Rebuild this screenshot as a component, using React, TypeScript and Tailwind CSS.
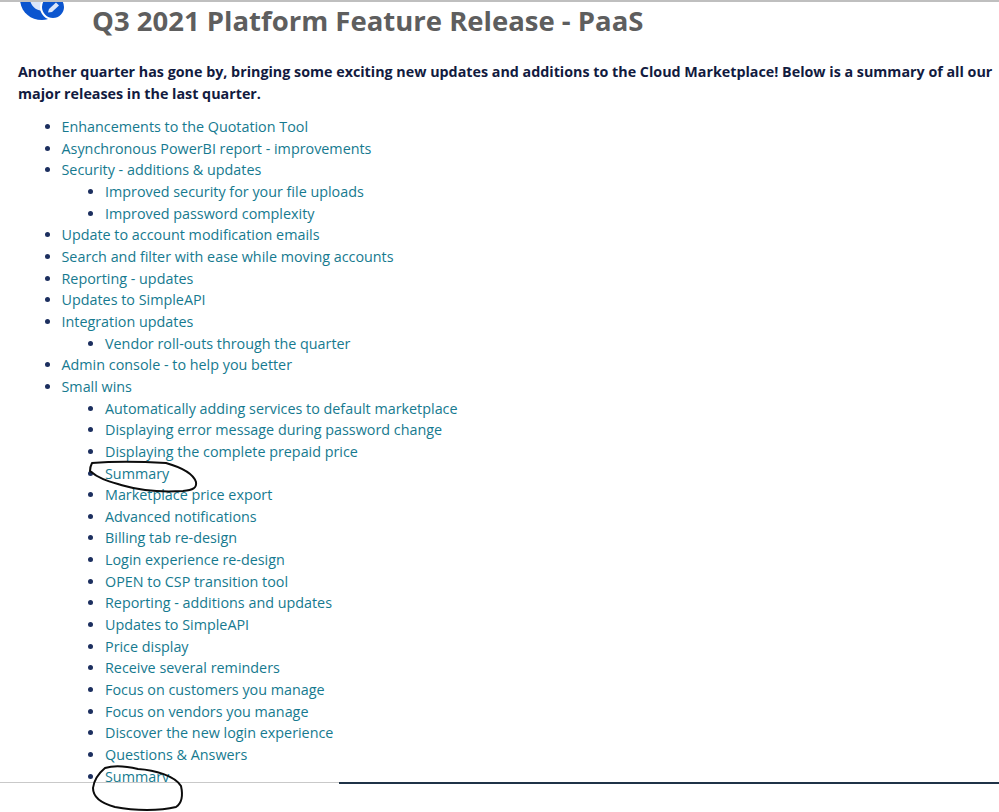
import React from "react";

type Item = { t: string; sub?: string[] };

const items: Item[] = [
  { t: "Enhancements to the Quotation Tool" },
  { t: "Asynchronous PowerBI report - improvements" },
  { t: "Security - additions & updates", sub: ["Improved security for your file uploads", "Improved password complexity"] },
  { t: "Update to account modification emails" },
  { t: "Search and filter with ease while moving accounts" },
  { t: "Reporting - updates" },
  { t: "Updates to SimpleAPI" },
  { t: "Integration updates", sub: ["Vendor roll-outs through the quarter"] },
  { t: "Admin console - to help you better" },
  {
    t: "Small wins",
    sub: [
      "Automatically adding services to default marketplace",
      "Displaying error message during password change",
      "Displaying the complete prepaid price",
      "Summary",
      "Marketplace price export",
      "Advanced notifications",
      "Billing tab re-design",
      "Login experience re-design",
      "OPEN to CSP transition tool",
      "Reporting - additions and updates",
      "Updates to SimpleAPI",
      "Price display",
      "Receive several reminders",
      "Focus on customers you manage",
      "Focus on vendors you manage",
      "Discover the new login experience",
      "Questions & Answers",
      "Summary",
    ],
  },
];

const font = "font-['Open_Sans','Noto_Sans',sans-serif]";

function Row({ children }: { children: React.ReactNode }) {
  return <li className="h-[21.67px] leading-[21.67px] whitespace-nowrap">{children}</li>;
}

export default function App() {
  return (
    <div className={`relative flex h-[812px] w-[999px] flex-col overflow-hidden bg-white ${font}`}>
      <div className="h-[2px] shrink-0 bg-[#bfbfbf]" />

      <header className="flex h-[37px] shrink-0 items-start gap-[24px] pl-[18px]">
        <svg className="shrink-0" width="50" height="22" viewBox="0 2 50 22">
          <path d="M2 0 C3 12 12 20 24 20 C28 20 31 19 33 17 L33 0 Z" fill="#0b55cf" />
          <path d="M12 0 C13 6 18 11 26 11 L33 11 L33 0 Z" fill="#dbe6fa" />
          <circle cx="35" cy="7" r="12" fill="#0b55cf" stroke="#fff" strokeWidth="2" />
          <path d="M30 12.5 L31 9 L38 2.5 L41 5.5 L34 12 Z" fill="#dbe6fa" />
        </svg>
        <h1 className="pt-[1px] whitespace-nowrap text-[27.5px] font-bold leading-[36px] text-[#5e5e5e]">
          Q3 2021 Platform Feature Release - PaaS
        </h1>
      </header>

      <p className="mt-[22px] shrink-0 whitespace-nowrap pl-[18px] text-[14.3px] font-bold leading-[22px] text-[#121b3f]">
        Another quarter has gone by, bringing some exciting new updates and additions to the Cloud Marketplace! Below is a summary of all our
        <br />
        major releases in the last quarter.
      </p>

      <div className="min-h-0 flex-1 overflow-hidden pt-[11px]">
        <ul className="list-disc pl-[61.5px] text-[14.35px] text-[#167a8f] marker:text-[#1c2f5f]">
          {items.map((item) => (
            <React.Fragment key={item.t}>
              <Row>{item.t}</Row>
              {item.sub && (
                <ul className="list-disc pl-[43.5px]">
                  {item.sub.map((s, i) => (
                    <Row key={s + i}>{s}</Row>
                  ))}
                </ul>
              )}
            </React.Fragment>
          ))}
        </ul>
      </div>

      <div className="flex h-[30px] shrink-0 items-start">
        <div className="h-px w-[339px] bg-[#c9c9c9]" />
        <div className="h-[2px] flex-1 bg-[#1f3347]" />
      </div>

      {/* Hand-drawn annotations lying over the list */}
      <svg className="pointer-events-none absolute inset-0" width="999" height="812" viewBox="0 0 999 812" fill="none" stroke="#0c0c0c" strokeWidth="2" strokeLinecap="round" strokeLinejoin="round">
        <path d="M92 463 C105 462 130 461 166 463 C180 467 193 473 196 482 C197 488 193 490 183 491 C165 492 142 491 125 486 C112 482 100 480 90 471 C90 467 91 465 92 463 Z" />
        <path d="M105 768 C115 765 125 766 138 769 C155 770 175 776 181 786 C183 795 182 803 176 807 C160 811 135 811 115 807 C100 803 93 797 93 788 C94 780 99 773 105 768 Z" />
      </svg>
    </div>
  );
}
